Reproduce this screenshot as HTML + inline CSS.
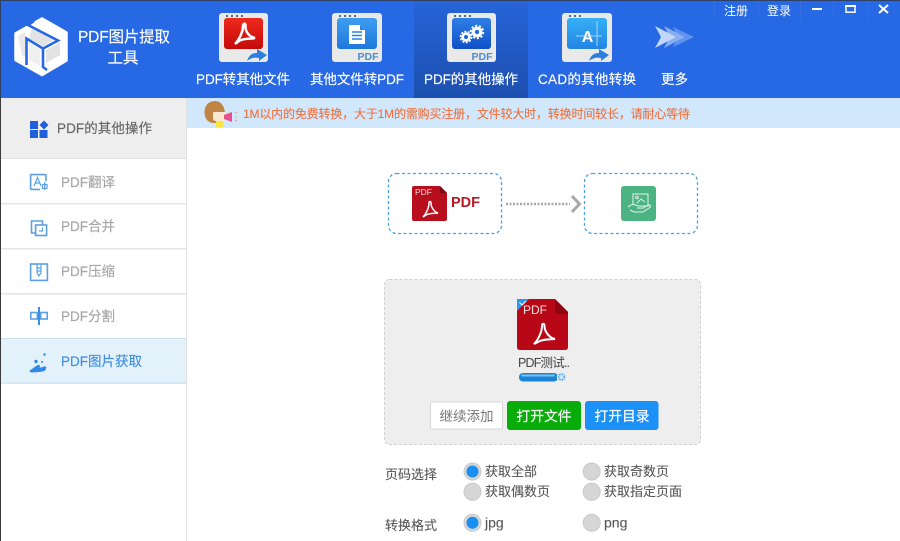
<!DOCTYPE html>
<html lang="zh-CN"><head><meta charset="utf-8"><title>PDF图片提取工具</title>
<style>
html,body{margin:0;padding:0;width:900px;height:541px;overflow:hidden;background:#fff}
svg{display:block;filter:blur(.35px)}
text{font-family:"Liberation Sans","Noto Sans CJK SC",sans-serif}
</style></head><body>
<svg width="900" height="541" viewBox="0 0 900 541" xmlns="http://www.w3.org/2000/svg">
<defs>
<linearGradient id="red" x1="0" y1="0" x2="0" y2="1"><stop offset="0" stop-color="#ee2a1c"/><stop offset="1" stop-color="#c40a0a"/></linearGradient>
<linearGradient id="blue1" x1="0" y1="0" x2="0" y2="1"><stop offset="0" stop-color="#3f9df0"/><stop offset="1" stop-color="#1e78dc"/></linearGradient>
<linearGradient id="blue2" x1="0" y1="0" x2="0" y2="1"><stop offset="0" stop-color="#2f7fe6"/><stop offset="1" stop-color="#0f50c8"/></linearGradient>
<linearGradient id="blue3" x1="0" y1="0" x2="0" y2="1"><stop offset="0" stop-color="#35b0f5"/><stop offset="1" stop-color="#2385e5"/></linearGradient>
<linearGradient id="act" x1="0" y1="0" x2="0" y2="1"><stop offset="0" stop-color="#2664d8"/><stop offset="1" stop-color="#1c4fae"/></linearGradient>
</defs>
<rect width="900" height="541" fill="#fff"/>
<rect width="900" height="98" fill="#2768e4"/>
<rect width="900" height="1" fill="#2d3f63"/>
<rect x="414" y="1" width="114" height="97" fill="url(#act)"/>

<!-- logo -->
<path d="M42 18.500 66.500 32.500V60.500L42 75 15.500 60V33.500Z" fill="#fff" stroke="#fff" stroke-width="2.500" stroke-linejoin="round"/>
<path d="M32 28 54 40 43 46 29 38.500Z" fill="#e2e2e2"/>
<path d="M46 50 60 42.500V55L46 63Z" fill="#e2e2e2"/>
<path d="M29 42 40 48.500V66L29 60Z" fill="#f0f0f0"/>
<path d="M18 36 25 32 26 55 22 56Z" fill="#e8e8e8"/>
<path d="M34 21 28 25 58 40.500 43 48.500 26.500 38.500V65M43 48.500V67L47 70" fill="none" stroke="#2768e4" stroke-width="2.600" stroke-linejoin="miter"/>
<text x="124" y="42" fill="#fff" stroke="#fff" stroke-width=".15" font-size="15.500" text-anchor="middle" textLength="92">PDF图片提取</text>
<text x="123" y="63" fill="#fff" stroke="#fff" stroke-width=".15" font-size="15.500" text-anchor="middle">工具</text>

<!-- toolbar icon 1 -->
<rect x="219" y="13" width="49" height="49" rx="3" fill="#e9e9e9"/>
<g fill="#5a6a80"><rect x="226" y="15" width="2" height="2"/><rect x="231" y="15" width="2" height="2"/><rect x="236" y="15" width="2" height="2"/><rect x="241" y="15" width="2" height="2"/></g>
<rect x="224" y="18" width="39" height="31" rx="3" fill="url(#red)"/>
<path d="M235 44C239 40 243 32 243 26 243 23 246 23 245.500 26 245 31 249 37 255 38 251 39 243 38 239 41Z" fill="none" stroke="#fff" stroke-width="2.500"/>
<path d="M247 61C249 55 252 53 257 53V49L267 55 259 61V58C254 57 251 58 247 61Z" fill="#2c7fe0"/>

<!-- toolbar icon 2 -->
<rect x="332" y="13" width="50" height="49" rx="3" fill="#e9e9e9"/>
<g fill="#5a6a80"><rect x="339" y="15" width="2" height="2"/><rect x="344" y="15" width="2" height="2"/><rect x="349" y="15" width="2" height="2"/><rect x="354" y="15" width="2" height="2"/></g>
<rect x="337" y="18" width="40" height="31" rx="3" fill="url(#blue1)"/>
<path d="M349 25H360L365 30V44H349Z" fill="#fff"/>
<path d="M360 25V30H365Z" fill="#2c84e2"/>
<path d="M352 32H362M352 35.500H362M352 39H362" stroke="#2c84e2" stroke-width="1.400"/>
<text x="368" y="60" fill="#4d8cc9" font-size="10.500" font-weight="bold" text-anchor="middle">PDF</text>

<!-- toolbar icon 3 -->
<rect x="447" y="13" width="49" height="49" rx="3" fill="#e9e9e9"/>
<g fill="#5a6a80"><rect x="454" y="15" width="2" height="2"/><rect x="459" y="15" width="2" height="2"/><rect x="464" y="15" width="2" height="2"/><rect x="469" y="15" width="2" height="2"/></g>
<rect x="452" y="18" width="39" height="31" rx="3" fill="url(#blue2)"/>
<circle cx="466" cy="37" r="3.400" fill="none" stroke="#fff" stroke-width="2.800"/>
<circle cx="466" cy="37" r="5.600" fill="none" stroke="#fff" stroke-width="1.500" stroke-dasharray="2 1.500"/>
<circle cx="477" cy="32" r="3.800" fill="none" stroke="#fff" stroke-width="3.200"/>
<circle cx="477" cy="32" r="6.400" fill="none" stroke="#fff" stroke-width="1.700" stroke-dasharray="2.200 1.800"/>
<text x="482" y="60" fill="#4d8cc9" font-size="10.500" font-weight="bold" text-anchor="middle">PDF</text>

<!-- toolbar icon 4 -->
<rect x="562" y="13" width="50" height="49" rx="3" fill="#e9e9e9"/>
<g fill="#5a6a80"><rect x="569" y="15" width="2" height="2"/><rect x="574" y="15" width="2" height="2"/><rect x="579" y="15" width="2" height="2"/></g>
<rect x="567" y="18" width="40" height="31" rx="3" fill="url(#blue3)"/>
<path d="M576 36H602M597 21V46" stroke="#9fd6fa" stroke-width="1"/>
<text x="587.500" y="42" fill="#fff" font-size="16" font-weight="bold" text-anchor="middle">A</text>
<path d="M589 61C591 55 594 53 599 53V49L609 55 601 61V58C596 57 593 58 589 61Z" fill="#2c7fe0"/>

<!-- more arrows -->
<path d="M673 27 694 37 673 47 678 37Z" fill="#5e92ec"/>
<path d="M664 26 685 37 664 48 670 37Z" fill="#86aef1"/>
<path d="M655 26 676 37 655 48 661 37Z" fill="#c3d8f8"/>

<g fill="#fff" stroke="#fff" stroke-width=".15" font-size="13.500">
<text x="196" y="84" textLength="94">PDF转其他文件</text>
<text x="310" y="84" textLength="94">其他文件转PDF</text>
<text x="424" y="84" textLength="94">PDF的其他操作</text>
<text x="538" y="84" textLength="98">CAD的其他转换</text>
<text x="661" y="84" textLength="27">更多</text>
</g>

<!-- window controls -->
<g stroke="#356fde" stroke-width="1"><path d="M714.500 1V20M758.500 1V20M800.500 1V20M833.500 1V20M867.500 1V20"/></g>
<text x="724" y="15" fill="#fff" font-size="12">注册</text>
<text x="767" y="15" fill="#fff" font-size="12">登录</text>
<rect x="812" y="8" width="10" height="2" fill="#fff"/>
<rect x="846" y="5.800" width="9" height="6.400" fill="none" stroke="#fff" stroke-width="1.500"/>
<rect x="845" y="5" width="11" height="2" fill="#fff"/>
<path d="M879 5 888 13M888 5 879 13" stroke="#fff" stroke-width="2"/>

<!-- sidebar -->
<rect x="0" y="98" width="186" height="443" fill="#fff"/>
<rect x="186" y="98" width="1" height="443" fill="#e2e2e2"/>
<rect x="0" y="98" width="186" height="61" fill="#eeeeee"/>
<rect y="158" width="186" height="1" fill="#e2e2e2"/>
<rect y="203" width="186" height="1.500" fill="#e6e6e6"/>
<rect y="248" width="186" height="1.500" fill="#e6e6e6"/>
<rect y="293" width="186" height="1.500" fill="#e6e6e6"/>
<rect y="338" width="186" height="46" fill="#e3f1fb"/>
<rect y="338" width="186" height="1" fill="#c9e0ef"/>
<rect y="382.500" width="186" height="1" fill="#c9e0ef"/>
<rect x="0" y="98" width="1" height="443" fill="#3b3b3b"/>
<rect x="0" y="0" width="1" height="98" fill="#2d3f63"/>

<!-- sidebar icons -->
<g fill="#1f5fdc"><rect x="30" y="121" width="8" height="8"/><path d="M44 120.500 48.500 125 44 129.500 39.500 125Z"/><rect x="30" y="130" width="8" height="8"/><rect x="39.500" y="130" width="8" height="8"/></g>
<g fill="none" stroke="#5aa0e4" stroke-width="1.600">
<path d="M46 181V175.500Q46 174.600 45 174.600H31.500Q30.600 174.600 30.600 175.500V188.500Q30.600 189.400 31.500 189.400H40"/>
<path d="M34 186 37.500 177.500 41 186M35.300 183H39.700" stroke-width="1.200"/>
<rect x="42.500" y="184.500" width="4.500" height="4" stroke-width="1.200"/><path d="M44.700 182V190" stroke-width="1.200"/>
<path d="M36 233H31.500V221H42.500V224.600"/>
<rect x="35.600" y="225" width="11" height="10.500"/>
<path d="M42.500 227.500V231H39" stroke-width="1.200"/>
<rect x="30.600" y="264" width="16.800" height="16.400"/>
<path d="M37 264V273L39 276 41 273V264M37 268H41M37 271H41" stroke-width="1.200"/>
<rect x="30.800" y="312.500" width="6.500" height="6.500"/>
<rect x="40.700" y="312.500" width="6.500" height="6.500"/>
</g>
<rect x="38" y="307" width="2" height="18" fill="#3d8de0"/>
<g fill="#2f8ae8">
<path d="M30 370C33 369 35 366 38 365 40 364.500 41 367 39 368L44 366.500C46 366 47 367.500 46 368.500 45 369 47 370 44 371 40 372.500 35 372 32 372.500 30 372.500 29 371 30 370Z"/>
<circle cx="36" cy="361.500" r="1.700"/><circle cx="44.500" cy="354.500" r="1.200"/><circle cx="42" cy="362" r="1"/>
</g>

<g font-size="13.500">
<text x="57" y="133" fill="#666" stroke="#666" stroke-width=".15" textLength="95">PDF的其他操作</text>
<text x="61" y="187" fill="#a6a6a6" stroke="#a6a6a6" stroke-width=".15" textLength="54">PDF翻译</text>
<text x="61" y="231" fill="#a6a6a6" stroke="#a6a6a6" stroke-width=".15" textLength="54">PDF合并</text>
<text x="61" y="276" fill="#a6a6a6" stroke="#a6a6a6" stroke-width=".15" textLength="54">PDF压缩</text>
<text x="61" y="321" fill="#a6a6a6" stroke="#a6a6a6" stroke-width=".15" textLength="54">PDF分割</text>
<text x="61" y="366" fill="#3f8fe0" stroke="#3f8fe0" stroke-width=".15" textLength="81">PDF图片获取</text>
</g>

<!-- banner -->
<rect x="187" y="98" width="713" height="30" fill="#d1e8fc"/>
<path d="M205 116C203 108 207 101 215 101 222 101 225 108 225 114 225 120 218 123 214 123 209 123 206 120 205 116Z" fill="#c08544"/>
<rect x="216" y="120" width="7" height="7" fill="#f5e642"/>
<path d="M213 112H225V119Q225 121 222 121H215Q213 120 213 118Z" fill="#fbe6d0"/>
<path d="M224 115 232 112V122L224 119Z" fill="#ea4f8e"/>
<path d="M235 113 237 112M235.500 117H237.500M235 120 237 121" stroke="#e8a090" stroke-width="1"/>
<text x="243" y="118" fill="#f0703c" stroke="#f0703c" stroke-width=".12" font-size="12" textLength="447">1M以内的免费转换，大于1M的需购买注册，文件较大时，转换时间较长，请耐心等待</text>

<!-- flow boxes -->
<rect x="388.500" y="173.500" width="113" height="60" rx="8" fill="#fff" stroke="#4ba0e0" stroke-width="1.300" stroke-dasharray="3 2.500"/>
<rect x="584.500" y="173.500" width="113" height="60" rx="8" fill="#fff" stroke="#4ba0e0" stroke-width="1.300" stroke-dasharray="3 2.500"/>
<path d="M414 186H440L447 193V219Q447 221 445 221H414Q412 221 412 219V188Q412 186 414 186Z" fill="#b80f1e"/>
<path d="M440 186 447 193H441Q440 193 440 192Z" fill="#7d0b14"/>
<text x="415" y="195" fill="#f3d5d5" font-size="8.500">PDF</text>
<path d="M423 217C426 214 429 208 429 203 429 201 431 201 431 203 431 207 434 212 438 213 435 213.500 429 213 426 215Z" fill="none" stroke="#fff" stroke-width="1.500"/>
<text x="451" y="207" fill="#b81a26" font-size="14.500" font-weight="bold">PDF</text>
<path d="M506 204H570" stroke="#a8a8a8" stroke-width="2.500" stroke-dasharray="2 1.500"/>
<path d="M572 196 579.500 204 572 212" fill="none" stroke="#a8a8a8" stroke-width="3"/>
<rect x="621" y="186" width="35" height="35" rx="3" fill="#4cb383"/>
<g fill="none" stroke="#e8f6ee" stroke-width="1">
<path d="M633 204V194H648V206H641"/><circle cx="637" cy="197.500" r="1.300"/><path d="M637 203 641 199 645 202"/>
<path d="M628 207C631 204 635 204 638 206H643C645 206 645 208 643 208H637M644 207 649 205C651 205 651 207 649 208L643 212H634L630 210"/>
</g>

<!-- drop area -->
<rect x="384.500" y="279.500" width="316" height="165" rx="5" fill="#eeeeee" stroke="#cfcfcf" stroke-width="1" stroke-dasharray="3 2"/>
<path d="M519 299H555L568 312V347Q568 350 565 350H520Q517 350 517 347V301Q517 299 519 299Z" fill="#b80818"/>
<path d="M555 299 568 312V314H558Q555 314 555 311Z" fill="#8d0612"/>
<path d="M517 311V299H529Z" fill="#2f97ea"/>
<path d="M519.500 302.500 522 305 526 301" fill="none" stroke="#fff" stroke-width="1"/>
<text x="523" y="314" fill="#f4dede" font-size="12">PDF</text>
<path d="M534 344C538 340 542 332 542 326 542 323 544.500 323 544.500 326 544.500 331 549 338 555 339 550 339.500 542 339 538 342Z" fill="none" stroke="#fff" stroke-width="2"/>
<text x="518" y="367" fill="#444" font-size="12.500" textLength="52">PDF测试..</text>
<rect x="519" y="373" width="39" height="8.500" rx="4" fill="#1a84d8"/>
<rect x="521" y="374.500" width="34" height="2" rx="1" fill="#7fc0ee"/>
<circle cx="561.500" cy="377" r="4.800" fill="#cfe6f8"/>
<circle cx="561.500" cy="377" r="2.800" fill="none" stroke="#2f8fe0" stroke-width="1.300" stroke-dasharray="1.300 1.300"/>

<!-- buttons -->
<rect x="430.500" y="402" width="72" height="27" rx="2" fill="#fff" stroke="#d8d8d8"/>
<rect x="507" y="401" width="74" height="29" rx="3" fill="#09ad09"/>
<rect x="585" y="401" width="73.500" height="29" rx="3" fill="#1b90f7"/>
<text x="466.500" y="421" fill="#777" font-size="13.500" text-anchor="middle">继续添加</text>
<text x="544" y="421" fill="#fff" stroke="#fff" stroke-width=".15" font-size="13.800" text-anchor="middle">打开文件</text>
<text x="622" y="421" fill="#fff" stroke="#fff" stroke-width=".15" font-size="13.800" text-anchor="middle">打开目录</text>

<!-- radios -->
<g fill="#d6d6d6" stroke="#c9c9c9" stroke-width="1">
<circle cx="472.500" cy="471.500" r="8.500"/><circle cx="591.700" cy="471.500" r="8.500"/>
<circle cx="472.500" cy="491.700" r="8.500"/><circle cx="591.700" cy="491.700" r="8.500"/>
<circle cx="472.500" cy="522.700" r="8.500"/><circle cx="591.700" cy="522.700" r="8.500"/>
</g>
<circle cx="472.500" cy="471.500" r="6" fill="#1b8ef2"/>
<circle cx="472.500" cy="522.700" r="6" fill="#1b8ef2"/>
<g fill="#555" stroke="#555" stroke-width=".1" font-size="13">
<text x="385" y="479">页码选择</text>
<text x="485" y="476">获取全部</text>
<text x="604" y="476">获取奇数页</text>
<text x="485" y="496">获取偶数页</text>
<text x="604" y="496">获取指定页面</text>
<text x="385" y="530">转换格式</text>
<text x="485" y="527.500" font-size="14">jpg</text>
<text x="604" y="527.500" font-size="14">png</text>
</g>
</svg>
</body></html>
